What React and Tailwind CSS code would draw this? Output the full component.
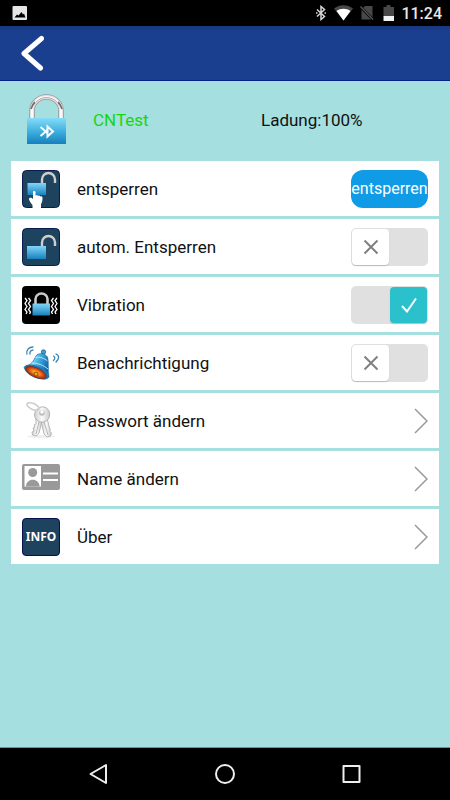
import { useState } from 'react'

function StatusBar() {
  return (
    <div className="flex h-[26px] items-center justify-between bg-black pl-3 pr-2 text-[#e8e8e8]">
      <svg className="size-4" viewBox="0 0 16 16" aria-hidden="true">
        <rect x="0.5" y="1" width="14.5" height="14" rx="1" fill="#e6e6e6" />
        <path d="M2.500 12.500l2.500-3 1.500 1 3-3.500 1.500 2.500 1-1 1.500 4z" fill="#000" />
      </svg>
      <div className="flex items-center">
        <svg className="mr-2 h-4 w-[10px]" viewBox="0 0 10 16" fill="none" stroke="#d8d8d8" strokeWidth="1.500" aria-hidden="true">
          <path d="M1 4.500l7.500 7L5 14.500v-13l3.500 3L1 11.500" />
          <path d="M0 8h1.500M8.500 8H10" />
        </svg>
        <svg className="mr-[7px] h-4 w-[19px]" viewBox="0 0 19 16" aria-hidden="true">
          <path d="M0 3.500C5.500-1 13.500-1 19 3.500L9.500 15.500z" fill="#484848" />
          <path d="M2.500 6C6.500 3 12.500 3 16.500 6L9.500 15.500z" fill="#fff" />
        </svg>
        <svg className="mr-[9px] h-4 w-[14px]" viewBox="0 0 14 16" aria-hidden="true">
          <path d="M5 1h7.500v13.500H1.500V4.500z" fill="#484848" />
          <path d="M0 1.500l13.500 13.500" stroke="#000" strokeWidth="2.600" />
          <path d="M0.500 1.500l12.500 13" stroke="#5a5a5a" strokeWidth="1.200" />
        </svg>
        <svg className="mr-1.5 h-4 w-3" viewBox="0 0 12 16" aria-hidden="true">
          <path d="M3.500 0h4v2H11v9H0.500V2h3z" fill="#484848" />
          <path d="M0.500 11H11v5H0.500z" fill="#f2f2f2" />
        </svg>
        <span className="pt-0.5 text-base leading-none font-medium">11:24</span>
      </div>
    </div>
  )
}

function DeviceLock() {
  return (
    <svg className="h-[52px] w-[41px]" viewBox="0 0 41 52" aria-hidden="true">
      <defs>
        <linearGradient id="deviceBody" x1="0" y1="0" x2="0" y2="1">
          <stop offset="0" stopColor="#85dcf8" />
          <stop offset="0.5" stopColor="#42b1df" />
          <stop offset="1" stopColor="#147fbd" />
        </linearGradient>
      </defs>
      <path d="M6 25V16.500a14.500 13.500 0 0 1 29 0V25" fill="none" stroke="#96969a" strokeWidth="5.500" />
      <path d="M6 25V16.500a14.500 13.500 0 0 1 29 0V25" fill="none" stroke="#e4e2e3" strokeWidth="4" />
      <path d="M6 25V16.500a14.500 13.500 0 0 1 29 0V25" fill="none" stroke="#fff" strokeWidth="1.600" />
      <path d="M5 15c1-3 2-5 4-7M36 15c-1-3-2-5-4-7" fill="none" stroke="#707070" strokeWidth="1.800" />
      <path d="M10 8c6-6 15-6 21 0" fill="none" stroke="#b48f92" strokeWidth="0.800" />
      <rect x="1" y="24" width="39" height="26" rx="1" fill="url(#deviceBody)" />
      <path d="M1 49.500h39" stroke="#2580a9" />
      <path d="M14.500 33l7 6M14.500 42l7-6" fill="none" stroke="#f4fcff" strokeWidth="2" />
      <path d="M21.500 32.500l5.500 5-5.500 5z" fill="none" stroke="#f4fcff" strokeWidth="2" />
    </svg>
  )
}

function LockGradient({ id }) {
  return (
    <linearGradient id={id} x1="0" y1="0" x2="0" y2="1">
      <stop offset="0" stopColor="#83d5f7" />
      <stop offset="1" stopColor="#1682bf" />
    </linearGradient>
  )
}

function UnlockTouchIcon() {
  return (
    <svg className="size-[38px]" viewBox="0 0 38 38" aria-hidden="true">
      <defs><LockGradient id="touchBody" /></defs>
      <rect x="0.5" y="0.5" width="37" height="37" rx="4" fill="#1d435f" stroke="#0a1c4d" />
      <path d="M20 13V9.500a6.500 6.500 0 0 1 13 0V13" fill="none" stroke="#d0cfce" strokeWidth="2.400" />
      <rect x="5.500" y="13" width="18.500" height="12" fill="url(#touchBody)" />
      <path d="M11 22c0-1.500 2.500-1.500 2.500 0v3.500c1-1 2.300-.6 2.500.4 1-.8 2-.4 2.200.6 1-.6 2.300 0 2.300 1.200 0 3-.5 5-1.500 6.300V38H10.500v-3C9 33.500 7.500 31 7 29.500 6.500 27.500 9.500 27 11 29z" fill="#fff" />
    </svg>
  )
}

function AutoUnlockIcon() {
  return (
    <svg className="size-[38px]" viewBox="0 0 38 38" aria-hidden="true">
      <defs><LockGradient id="autoBody" /></defs>
      <rect x="0.5" y="0.5" width="37" height="37" rx="4" fill="#1d435f" stroke="#0a1c4d" />
      <path d="M20 18v-3.500a6.500 6.500 0 0 1 13 0V18" fill="none" stroke="#d0cfce" strokeWidth="2.400" />
      <rect x="5" y="18" width="19" height="13" fill="url(#autoBody)" />
    </svg>
  )
}

function VibrationIcon() {
  return (
    <svg className="size-[38px]" viewBox="0 0 38 38" aria-hidden="true">
      <defs><LockGradient id="vibrationBody" /></defs>
      <rect width="38" height="38" rx="4" fill="#000" />
      <path d="M13.500 18v-5a6 5.500 0 0 1 12 0v5" fill="none" stroke="#c9c9c9" strokeWidth="2.600" />
      <rect x="10.500" y="17.500" width="17.500" height="12" rx="0.500" fill="url(#vibrationBody)" />
      <g fill="none" stroke="#fff" strokeWidth="1.300">
        <path d="M3 12l2 2.500-2 3 2 3-2 3 2 2.500-1 2" />
        <path d="M6.500 12l2 2.500-2 3 2 3-2 3 2 2.500-1 2" />
        <path d="M31.500 12l-2 2.500 2 3-2 3 2 3-2 2.500 1 2" />
        <path d="M35 12l-2 2.500 2 3-2 3 2 3-2 2.500 1 2" />
      </g>
    </svg>
  )
}

function BellIcon() {
  return (
    <svg className="size-[38px]" viewBox="0 0 38 38" aria-hidden="true">
      <defs>
        <linearGradient id="bellBody" x1="0" y1="0" x2="1" y2="0.4">
          <stop offset="0" stopColor="#2b8fca" />
          <stop offset="0.35" stopColor="#8fdcf6" />
          <stop offset="0.6" stopColor="#42aee0" />
          <stop offset="1" stopColor="#1268a8" />
        </linearGradient>
        <radialGradient id="bellInside">
          <stop offset="0" stopColor="#ffcf42" />
          <stop offset="0.5" stopColor="#ed6c13" />
          <stop offset="1" stopColor="#8d200b" />
        </radialGradient>
      </defs>
      <circle cx="21.500" cy="8" r="2.200" fill="#3c9fce" stroke="#135b8d" strokeWidth="0.700" />
      <path d="M14 12c2-3.500 9-3 11.500 1 1.500 5 0 12 1.500 20-2 3-8 2-13-1-6-2-11-5-12-9 7-2 9-5 12-11z" fill="url(#bellBody)" stroke="#1a6ca3" strokeWidth="0.700" />
      <path d="M13.500 13.500c4-1 8.500.5 12 3.500M10 19c6 0 11 2 16 6" fill="none" stroke="#c4edf8" strokeWidth="0.900" />
      <ellipse cx="14.500" cy="28" rx="13" ry="6" transform="rotate(24 14.500 28)" fill="#1a78b8" />
      <ellipse cx="14" cy="28.500" rx="11.500" ry="4.800" transform="rotate(24 14 28.500)" fill="url(#bellInside)" />
      <circle cx="14" cy="30" r="2" fill="#eea321" stroke="#872b0b" strokeWidth="0.700" />
      <g fill="none" stroke="#3e83b2" strokeWidth="1.300" strokeLinecap="round">
        <path d="M5 10c-1-4 2-7 6-7" />
        <path d="M8 10c-.5-2 1-4 3-4" />
        <path d="M31.500 12c2 1 1.500 3 0 4.500" />
        <path d="M34 10c4 2 3 5 0 8" />
      </g>
    </svg>
  )
}

function KeysIcon() {
  return (
    <svg className="size-[38px]" viewBox="0 0 38 38" aria-hidden="true">
      <defs>
        <linearGradient id="keyMetal">
          <stop offset="0" stopColor="#d0d0d0" />
          <stop offset="0.5" stopColor="#fafafa" />
          <stop offset="1" stopColor="#cacaca" />
        </linearGradient>
      </defs>
      <ellipse cx="19" cy="34.500" rx="14" ry="1.500" fill="#eee" />
      <g fill="url(#keyMetal)" stroke="#a8a8a8" strokeWidth="0.800">
        <path d="M14 16l6 3-3 12-2.500 3-4-1-.5-3 2-1-1-3 2-1-1-2 2-1z" />
        <path d="M19 19l6-3 2.500 10 1 2-1 1 2 2-1 3-3.500 1-3-3z" />
        <path d="M19 5c6-1 9.500 4 8.500 9-1 5-5 6-8 6s-7-3-7-7 3-7 6.500-8z" />
      </g>
      <ellipse cx="11" cy="4.500" rx="6.500" ry="3" transform="rotate(25 11 4.500)" fill="none" stroke="#cfcfcf" strokeWidth="1.600" />
      <circle cx="20" cy="11" r="2.800" fill="#bbb" />
      <circle cx="20" cy="10" r="1.800" fill="#fff" />
      <path d="M17 20l-3 12M22 20l4 13" stroke="#999" strokeWidth="0.700" />
    </svg>
  )
}

function CardIcon() {
  return (
    <svg className="size-[38px]" viewBox="0 0 38 38" aria-hidden="true">
      <rect y="4" width="38" height="26" rx="2" fill="#999" />
      <rect x="2.500" y="6" width="16.500" height="20.500" fill="#fff" />
      <circle cx="10.700" cy="12.500" r="4.500" fill="#999" />
      <path d="M4 26.500c0-9 13.500-9 13.500 0z" fill="#999" />
      <path d="M21 13.500h15M21 20h15" stroke="#fff" strokeWidth="1.800" />
    </svg>
  )
}

function InfoIcon() {
  return (
    <span className="flex size-[38px] items-center justify-center rounded border border-[#08104f] bg-[#1d435f] font-['Noto_Sans',sans-serif] text-xs font-bold text-white">
      INFO
    </span>
  )
}

function Toggle({ id, checked, onChange }) {
  return (
    <span className="relative flex h-[38px] w-[77px] shrink-0">
      <input
        id={id}
        type="checkbox"
        role="switch"
        checked={checked}
        onChange={onChange}
        className="size-full cursor-pointer appearance-none rounded-[5px] bg-[#e0e0e0]"
      />
      <span
        className={`pointer-events-none absolute inset-y-px flex w-[37px] items-center justify-center rounded-[4px] shadow-[0_1px_1px_#bbb] ${
          checked ? 'right-px bg-[#2ac1cc] text-white' : 'left-px bg-white text-[#808080]'
        }`}
      >
        <svg className="size-4" viewBox="0 0 16 16" fill="none" stroke="currentColor" strokeWidth="2" aria-hidden="true">
          <path d={checked ? 'M1 9l5 5.500L15 1.500' : 'M1.500 1.500l13 13M14.500 1.500l-13 13'} />
        </svg>
      </span>
    </span>
  )
}

function Chevron() {
  return (
    <svg className="h-[26px] w-[14px]" viewBox="0 0 14 26" fill="none" stroke="#999" strokeWidth="1.500" aria-hidden="true">
      <path d="M1 1l12 12L1 25" />
    </svg>
  )
}

const rowClass = 'flex h-[55px] w-full items-center gap-[17px] bg-white px-[11px] text-left text-[17px]'
const labelClass = 'flex-1 pt-0.5'

const links = [
  { label: 'Passwort ändern', icon: KeysIcon },
  { label: 'Name ändern', icon: CardIcon },
  { label: 'Über', icon: InfoIcon },
]

export default function App() {
  const [settings, setSettings] = useState({ auto: false, vibration: true, notify: false })

  const toggles = [
    { key: 'auto', label: 'autom. Entsperren', icon: AutoUnlockIcon },
    { key: 'vibration', label: 'Vibration', icon: VibrationIcon },
    { key: 'notify', label: 'Benachrichtigung', icon: BellIcon },
  ]

  return (
    <div className="flex min-h-screen flex-col bg-[#a5dfdf] font-[Roboto,sans-serif] text-[#111]">
      <StatusBar />

      <header className="flex h-[55px] items-center border-b border-[#06208a] bg-linear-to-b from-[#17377d] to-[#1a3f8f] to-10% px-5">
        <button type="button" aria-label="Zurück">
          <svg className="h-9 w-6" viewBox="0 0 24 36" fill="none" stroke="#fff" strokeWidth="5" strokeLinecap="round" strokeLinejoin="round">
            <path d="M21.500 3.500L4 18.500 20.500 33" />
          </svg>
        </button>
      </header>

      <main className="flex-1 px-[11px]">
        {/* Gerät */}
        <div className="grid h-20 grid-cols-[82px_168px_1fr] items-center text-[17px]">
          <div className="pb-0.5 pl-[15px]"><DeviceLock /></div>
          <span className="text-[#16d516]">CNTest</span>
          <span>Ladung:100%</span>
        </div>

        <div className="flex flex-col gap-[3px]">
          <div className={rowClass}>
            <UnlockTouchIcon />
            <span className={labelClass}>entsperren</span>
            <button type="button" className="h-[38px] w-[77px] rounded-[12px] bg-[#109be6] text-base text-white">
              entsperren
            </button>
          </div>

          {toggles.map(({ key, label, icon: Icon }) => (
            <div key={key} className={rowClass}>
              <Icon />
              <label htmlFor={key} className={labelClass}>{label}</label>
              <Toggle
                id={key}
                checked={settings[key]}
                onChange={() => setSettings(s => ({ ...s, [key]: !s[key] }))}
              />
            </div>
          ))}

          {links.map(({ label, icon: Icon }) => (
            <button key={label} type="button" className={rowClass}>
              <Icon />
              <span className={labelClass}>{label}</span>
              <Chevron />
            </button>
          ))}
        </div>
      </main>

      {/* Android-Navigation */}
      <nav className="flex h-[53px] items-center justify-around border-t border-[#6b9494] bg-black px-[35px]">
        <button type="button" aria-label="Zurück">
          <svg className="size-[22px]" viewBox="0 0 22 22" fill="none" stroke="#eee" strokeWidth="2" strokeLinejoin="round">
            <path d="M19 2v18L3.500 11z" />
          </svg>
        </button>
        <button type="button" aria-label="Startbildschirm">
          <svg className="size-[22px]" viewBox="0 0 22 22" fill="none" stroke="#eee" strokeWidth="2">
            <circle cx="11" cy="11" r="9" />
          </svg>
        </button>
        <button type="button" aria-label="Letzte Apps">
          <svg className="size-[22px]" viewBox="0 0 22 22" fill="none" stroke="#eee" strokeWidth="2" strokeLinejoin="round">
            <rect x="2.500" y="3" width="16" height="16" />
          </svg>
        </button>
      </nav>
    </div>
  )
}
